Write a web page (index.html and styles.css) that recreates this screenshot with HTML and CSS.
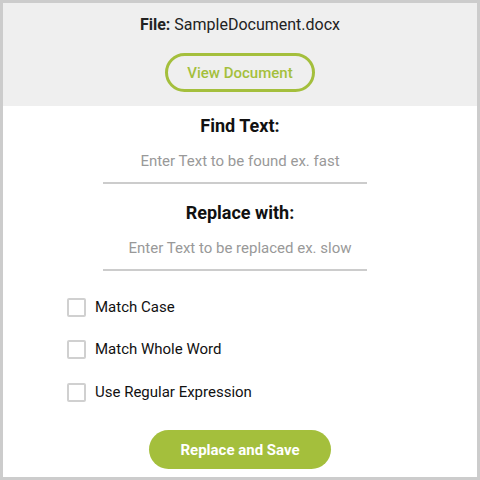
FILE: index.html
```html
<!DOCTYPE html>
<html>
<head>
<meta charset="utf-8">
<link rel="stylesheet" href="styles.css">
</head>
<body>
<div class="frame">
  <header class="head">
    <div class="file"><b>File:</b> SampleDocument.docx</div>
    <button class="view-btn">View Document</button>
  </header>
  <main class="main">
    <div class="field">
      <div class="label">Find Text:</div>
      <div class="input">Enter Text to be found ex. fast</div>
    </div>
    <div class="field second">
      <div class="label">Replace with:</div>
      <div class="input">Enter Text to be replaced ex. slow</div>
    </div>
    <div class="options">
      <label class="opt"><span class="box"></span>Match Case</label>
      <label class="opt"><span class="box"></span>Match Whole Word</label>
      <label class="opt"><span class="box"></span>Use Regular Expression</label>
    </div>
    <div class="actions">
      <button class="save-btn">Replace and Save</button>
    </div>
  </main>
</div>
</body>
</html>
```
FILE: styles.css
```css
html, body { margin: 0; padding: 0; background: #fff; }
body { font-family: Roboto, "Noto Sans", Arial, sans-serif; color: #111; }
.frame {
  width: 480px; height: 480px; box-sizing: border-box;
  border: 3px solid #cccccc; background: #fff;
  display: flex; flex-direction: column;
}
.head {
  background: #efefef; height: 103px; box-sizing: border-box;
  padding-top: 12px;
  display: flex; flex-direction: column; align-items: center;
}
.file { font-size: 16px; line-height: 20px; color: #222; }
.file b { font-weight: 700; }
.view-btn {
  margin-top: 18px;
  width: 150px; height: 39px; box-sizing: border-box;
  border: 3px solid #a4bf3c; border-radius: 20px; background: transparent;
  color: #a4bf3c; font-family: inherit; font-size: 15px; font-weight: 500;
  padding: 0;
}
.main { display: flex; flex-direction: column; align-items: center; }
.field {
  display: flex; flex-direction: column; align-items: center;
  width: 264px; margin-right: 10px;
}
.label {
  font-size: 18px; font-weight: 700; line-height: 20px; margin-top: 10px;
  color: #111; padding-left: 10px;
}
.second .label { margin-top: 19px; }
.input {
  width: 100%; box-sizing: border-box; text-align: center; color: #999; font-size: 15px;
  line-height: 20px; padding: 15px 0 11px 10px; border-bottom: 2px solid #cccccc;
}
.options {
  align-self: stretch; padding-left: 64px; margin-top: 26px;
  display: flex; flex-direction: column; gap: 22px;
}
.opt { display: flex; align-items: center; font-size: 15px; line-height: 20px; color: #111; }
.opt + .opt + .opt { margin-top: 1px; }
.box {
  width: 19px; height: 19px; box-sizing: border-box;
  border: 2px solid #d0d0d0; border-radius: 2px; margin-right: 9px;
}
.actions { margin-top: 28px; }
.save-btn {
  width: 182px; height: 39px; border: 0; border-radius: 20px;
  background: #a4bf3c; color: #fff; font-family: inherit;
  font-size: 15px; font-weight: 700; padding: 0;
}
```
